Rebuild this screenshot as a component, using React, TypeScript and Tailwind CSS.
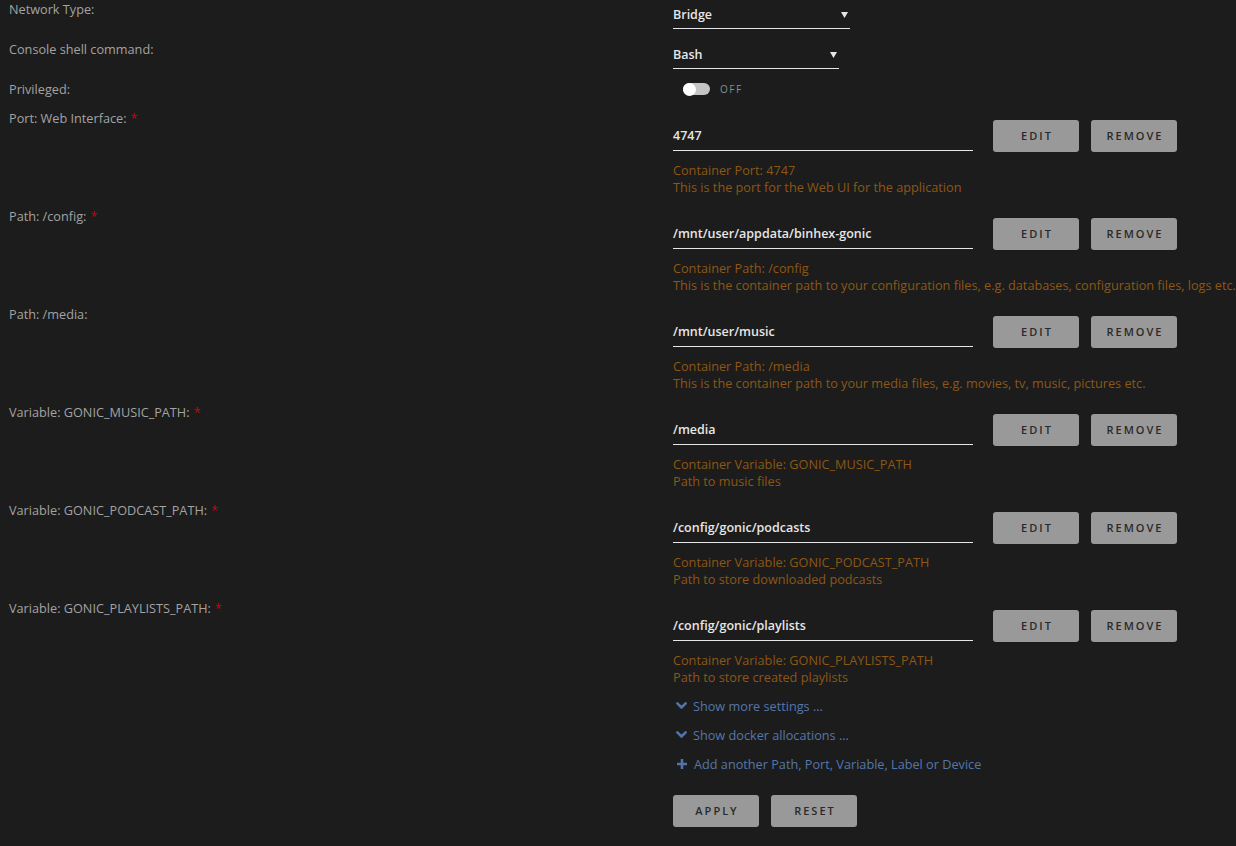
import React from "react";

const font = { fontFamily: '"Open Sans", "Noto Sans", sans-serif' };

type Row = { label: string; req: boolean; value: string; d1: string; d2: string };

const rows: Row[] = [
  { label: "Port: Web Interface:", req: true, value: "4747", d1: "Container Port: 4747", d2: "This is the port for the Web UI for the application" },
  { label: "Path: /config:", req: true, value: "/mnt/user/appdata/binhex-gonic", d1: "Container Path: /config", d2: "This is the container path to your configuration files, e.g. databases, configuration files, logs etc." },
  { label: "Path: /media:", req: false, value: "/mnt/user/music", d1: "Container Path: /media", d2: "This is the container path to your media files, e.g. movies, tv, music, pictures etc." },
  { label: "Variable: GONIC_MUSIC_PATH:", req: true, value: "/media", d1: "Container Variable: GONIC_MUSIC_PATH", d2: "Path to music files" },
  { label: "Variable: GONIC_PODCAST_PATH:", req: true, value: "/config/gonic/podcasts", d1: "Container Variable: GONIC_PODCAST_PATH", d2: "Path to store downloaded podcasts" },
  { label: "Variable: GONIC_PLAYLISTS_PATH:", req: true, value: "/config/gonic/playlists", d1: "Container Variable: GONIC_PLAYLISTS_PATH", d2: "Path to store created playlists" },
];

function Btn({ children }: { children: React.ReactNode }) {
  return (
    <div className="w-[86px] h-[32px] rounded-[3px] bg-[#999999] flex items-center justify-center text-[11px] font-semibold tracking-[2px] text-[#2a2a2a] pl-[2px]">
      {children}
    </div>
  );
}

function Label({ text, req }: { text: string; req?: boolean }) {
  return (
    <div className="pl-[9px] text-[12.7px] leading-[18px] text-[#a3a3a3]">
      {text}
      {req && <span className="text-[#d00000] ml-[4px]">*</span>}
    </div>
  );
}

function Select({ value, w }: { value: string; w: string }) {
  return (
    <div className={`${w} h-[29px] border-b border-[#e6e6e6] flex items-start justify-between pt-[6px]`}>
      <span className="text-[12.5px] leading-[18px] font-semibold text-[#e6e6e6]">{value}</span>
      <svg width="7" height="6" viewBox="0 0 7 6" className="mt-[6px] mr-[2px]">
        <path d="M0 0 H7 L3.5 6 Z" fill="#e6e6e6" />
      </svg>
    </div>
  );
}

function Chevron() {
  return (
    <svg width="11" height="8" viewBox="0 0 11 8" className="mr-[6px]">
      <path d="M1.4 1.4 L5.5 5.5 L9.6 1.4" stroke="#5174a8" strokeWidth="2.6" fill="none" strokeLinecap="round" strokeLinejoin="round" />
    </svg>
  );
}

function Plus() {
  return (
    <svg width="10" height="10" viewBox="0 0 10 10" className="mr-[7px]">
      <path d="M5 0 V10 M0 5 H10" stroke="#5174a8" strokeWidth="2.6" />
    </svg>
  );
}

export default function App() {
  return (
    <div className="w-[1236px] h-[846px] bg-[#1c1c1c] overflow-hidden" style={font}>
      <div className="grid grid-cols-[673px_563px]">
        <div className="h-[40px]"><Label text="Network Type:" /></div>
        <div className="h-[40px]"><Select value="Bridge" w="w-[177px]" /></div>
        <div className="h-[40px]"><Label text="Console shell command:" /></div>
        <div className="h-[40px]"><Select value="Bash" w="w-[166px]" /></div>
        <div className="h-[29px]"><Label text="Privileged:" /></div>
        <div className="h-[29px] flex items-start pt-[2px]">
          <div className="ml-[10px] w-[27px] h-[12px] rounded-full bg-[#c4c4c4] relative mt-[1px]">
            <div className="absolute left-0 top-[-0.5px] w-[13px] h-[13px] rounded-full bg-white" />
          </div>
          <span className="ml-[10px] text-[10px] leading-[14px] tracking-[1.5px] text-[#8d8d8d]">OFF</span>
        </div>
        {rows.map((r) => (
          <React.Fragment key={r.label}>
            <div className="h-[98px]"><Label text={r.label} req={r.req} /></div>
            <div className="h-[98px] pt-[11px]">
              <div className="flex items-start">
                <div className="w-[300px] h-[31px] border-b border-[#e6e6e6] pt-[7px] text-[12.5px] leading-[18px] font-semibold text-[#e6e6e6]">
                  {r.value}
                </div>
                <div className="ml-[20px] flex gap-[12px]">
                  <Btn>EDIT</Btn>
                  <Btn>REMOVE</Btn>
                </div>
              </div>
              <div className="mt-[10px] text-[12.7px] leading-[17px] text-[#8d5714] whitespace-nowrap">
                <div>{r.d1}</div>
                <div>{r.d2}</div>
              </div>
            </div>
          </React.Fragment>
        ))}
        <div />
        <div className="text-[12.7px] leading-[18px] text-[#5477aa]">
          <div className="flex items-center pl-[3px]"><Chevron />Show more settings ...</div>
          <div className="flex items-center pl-[3px] mt-[11px]"><Chevron />Show docker allocations ...</div>
          <div className="flex items-center pl-[4px] mt-[11px]"><Plus />Add another Path, Port, Variable, Label or Device</div>
          <div className="flex gap-[12px] mt-[22px]">
            <Btn>APPLY</Btn>
            <Btn>RESET</Btn>
          </div>
        </div>
      </div>
    </div>
  );
}
